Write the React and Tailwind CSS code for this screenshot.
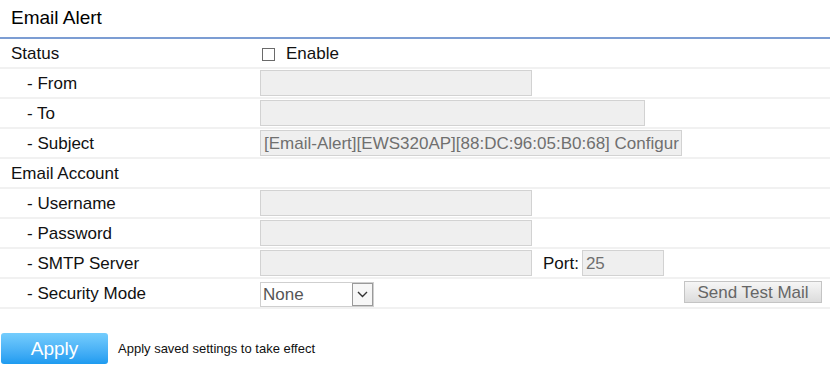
const labelBase = "flex items-center w-[260px] shrink-0 text-[17px] text-[#111] pt-[2px]"

function Row({ label, sub, children }) {
  return (
    <div className="flex items-center h-[30px] border-b-2 border-[#f1f1f1]">
      <div className={`${labelBase} ${sub ? "pl-[27px]" : "pl-[11px]"}`}>{label}</div>
      <div className="flex items-center flex-1 min-w-0">{children}</div>
    </div>
  )
}

function Field({ width, value }) {
  return (
    <div
      className={`${width} h-[26px] bg-[#efefef] border border-[#d2d2d2] flex items-center pl-[3px] pt-[1px] overflow-hidden whitespace-nowrap text-[17px] text-[#6f6f6f]`}
    >
      {value}
    </div>
  )
}

export default function App() {
  return (
    <div className="w-[830px] h-[366px] bg-white font-['Liberation_Sans',Arial,sans-serif] overflow-hidden">
      <div className="h-[37px] flex items-center pl-[11px] text-[19px] text-black">Email Alert</div>
      <div className="h-[2px] bg-[#7c9dd3]" />

      <Row label="Status">
        <div className="w-[13px] h-[13px] border border-[#6a6a6a] ml-[2px] mt-[2px] bg-white" />
        <span className="ml-[11px] pt-[2px] text-[17px] text-[#111]">Enable</span>
      </Row>
      <Row label="- From" sub>
        <Field width="w-[272px]" />
      </Row>
      <Row label="- To" sub>
        <Field width="w-[385px]" />
      </Row>
      <Row label="- Subject" sub>
        <Field width="w-[422px]" value="[Email-Alert][EWS320AP][88:DC:96:05:B0:68] Configur" />
      </Row>
      <Row label="Email Account" />
      <Row label="- Username" sub>
        <Field width="w-[272px]" />
      </Row>
      <Row label="- Password" sub>
        <Field width="w-[272px]" />
      </Row>
      <Row label="- SMTP Server" sub>
        <Field width="w-[272px]" />
        <span className="ml-[11px] mr-[3px] pt-[2px] text-[17px] text-[#111]">Port:</span>
        <Field width="w-[82px]" value="25" />
      </Row>
      <Row label="- Security Mode" sub>
        <div className="w-[114px] h-[25px] mt-[2px] border border-[#cfcfcf] bg-white flex items-center">
          <span className="flex-1 pl-[2px] pt-[1px] text-[17px] text-[#555]">None</span>
          <div className="w-[21px] h-[23px] border border-[#9a9a9a] flex items-center justify-center bg-[#f7f7f7]">
            <svg width="11" height="7" viewBox="0 0 11 7">
              <polyline points="1,1 5.5,5.5 10,1" fill="none" stroke="#333" strokeWidth="1.4" />
            </svg>
          </div>
        </div>
        <button className="ml-auto mr-[8px] -mt-[2px] w-[138px] h-[22px] border border-[#c4c4c4] bg-gradient-to-b from-[#f6f6f6] to-[#dcdcdc] text-[17px] text-[#666] leading-none">
          Send Test Mail
        </button>
      </Row>

      <div className="flex items-center mt-[24px] pl-[1px]">
        <button className="w-[107px] h-[31px] rounded-[3px] bg-gradient-to-b from-[#74cdfd] to-[#1c9bf0] text-white text-[19px] leading-none">
          Apply
        </button>
        <span className="ml-[10px] text-[13px] text-[#111]">Apply saved settings to take effect</span>
      </div>
    </div>
  )
}
